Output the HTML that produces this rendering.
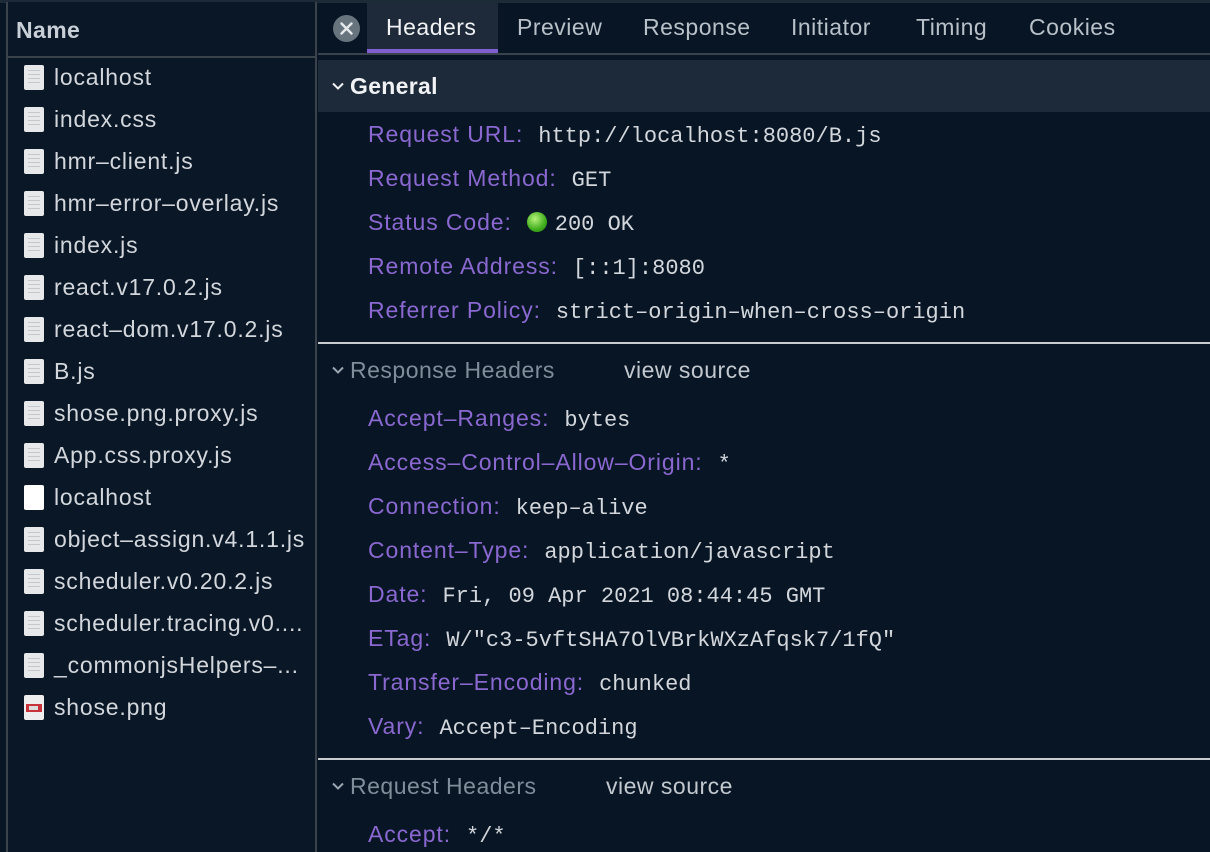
<!DOCTYPE html>
<html><head><meta charset="utf-8"><style>
*{margin:0;padding:0;box-sizing:border-box}
body{width:1210px;height:852px;background:#071525;position:relative;overflow:hidden;font-family:"Liberation Sans",sans-serif;color:#d3d7dc;letter-spacing:0.8px}
.a{position:absolute;white-space:nowrap}
.left{position:absolute;left:6px;top:2px;width:311px;height:850px;background:#091727;border-left:2px solid #3a434c;border-right:2px solid #3a434c}
.name{font-size:23px;font-weight:bold;color:#c9cfd6;left:16px;top:17px;letter-spacing:0.4px}
.row{position:absolute;left:8px;width:307px;height:42px;font-size:23px;color:#d3d7dc}
.row span{position:absolute;left:46px;top:8px}
.ic{position:absolute;left:16px;top:9px;width:20px;height:25px;background:#e6e8ea;border-radius:2px}
.ic i{position:absolute;left:4px;width:12px;height:1px;background:#c4c8cc}
.lab{color:#8a68d0;font-size:23px;margin-right:15px;letter-spacing:0.9px}
.val{font-family:"Liberation Mono",monospace;font-size:22px;color:#d3d7dc;letter-spacing:0}
.kv{position:absolute;left:368px;white-space:nowrap}
.tab{position:absolute;top:14px;font-size:23px;color:#b8c0c8;letter-spacing:0.5px}
.chev{display:inline-block;width:14px;height:10px;margin-right:6px;vertical-align:3px}
</style></head><body>
<div class="a" style="left:0;top:0;width:1210px;height:3px;background:#1d2a38"></div>
<div class="left"></div>
<div class="a" style="left:8px;top:56px;width:309px;height:2px;background:#3a434c"></div>
<div class="a name">Name</div>

<div class="row" style="top:56px"><div class="ic"><i style="top:5px"></i><i style="top:9px"></i><i style="top:13px"></i><i style="top:17px"></i></div><span>localhost</span></div>
<div class="row" style="top:98px"><div class="ic"><i style="top:5px"></i><i style="top:9px"></i><i style="top:13px"></i><i style="top:17px"></i></div><span>index.css</span></div>
<div class="row" style="top:140px"><div class="ic"><i style="top:5px"></i><i style="top:9px"></i><i style="top:13px"></i><i style="top:17px"></i></div><span>hmr–client.js</span></div>
<div class="row" style="top:182px"><div class="ic"><i style="top:5px"></i><i style="top:9px"></i><i style="top:13px"></i><i style="top:17px"></i></div><span>hmr–error–overlay.js</span></div>
<div class="row" style="top:224px"><div class="ic"><i style="top:5px"></i><i style="top:9px"></i><i style="top:13px"></i><i style="top:17px"></i></div><span>index.js</span></div>
<div class="row" style="top:266px"><div class="ic"><i style="top:5px"></i><i style="top:9px"></i><i style="top:13px"></i><i style="top:17px"></i></div><span>react.v17.0.2.js</span></div>
<div class="row" style="top:308px"><div class="ic"><i style="top:5px"></i><i style="top:9px"></i><i style="top:13px"></i><i style="top:17px"></i></div><span>react–dom.v17.0.2.js</span></div>
<div class="row" style="top:350px"><div class="ic"><i style="top:5px"></i><i style="top:9px"></i><i style="top:13px"></i><i style="top:17px"></i></div><span>B.js</span></div>
<div class="row" style="top:392px"><div class="ic"><i style="top:5px"></i><i style="top:9px"></i><i style="top:13px"></i><i style="top:17px"></i></div><span>shose.png.proxy.js</span></div>
<div class="row" style="top:434px"><div class="ic"><i style="top:5px"></i><i style="top:9px"></i><i style="top:13px"></i><i style="top:17px"></i></div><span>App.css.proxy.js</span></div>
<div class="row" style="top:476px"><div class="ic" style="background:#fff"></div><span>localhost</span></div>
<div class="row" style="top:518px"><div class="ic"><i style="top:5px"></i><i style="top:9px"></i><i style="top:13px"></i><i style="top:17px"></i></div><span>object–assign.v4.1.1.js</span></div>
<div class="row" style="top:560px"><div class="ic"><i style="top:5px"></i><i style="top:9px"></i><i style="top:13px"></i><i style="top:17px"></i></div><span>scheduler.v0.20.2.js</span></div>
<div class="row" style="top:602px"><div class="ic"><i style="top:5px"></i><i style="top:9px"></i><i style="top:13px"></i><i style="top:17px"></i></div><span>scheduler.tracing.v0....</span></div>
<div class="row" style="top:644px"><div class="ic"><i style="top:5px"></i><i style="top:9px"></i><i style="top:13px"></i><i style="top:17px"></i></div><span>_commonjsHelpers–...</span></div>
<div class="row" style="top:686px"><div class="ic" style="background:#eee"><i style="top:9px;left:2px;width:16px;height:8px;background:#c8323a"></i><i style="top:11px;left:5px;width:9px;height:4px;background:#ddd"></i></div><span>shose.png</span></div>

<div class="a" style="left:318px;top:53px;width:892px;height:2px;background:#3a434c"></div>
<div class="a" style="left:333px;top:15px;width:27px;height:27px;border-radius:50%;background:#67747e;letter-spacing:0"><svg width="27" height="27"><path d="M8.5 8.5L18.5 18.5M18.5 8.5L8.5 18.5" stroke="#e6e9ec" stroke-width="2.4" stroke-linecap="round"/></svg></div>
<div class="a" style="left:367px;top:3px;width:131px;height:50px;background:#1e2a39;border-bottom:4px solid #7f5fcf"></div>
<div class="tab" style="left:386px;color:#f0f2f4">Headers</div>
<div class="tab" style="left:517px">Preview</div>
<div class="tab" style="left:643px">Response</div>
<div class="tab" style="left:791px">Initiator</div>
<div class="tab" style="left:916px">Timing</div>
<div class="tab" style="left:1029px">Cookies</div>

<div class="a" style="left:318px;top:60px;width:892px;height:52px;background:#1d2a3a"></div>
<div class="a" style="left:331px;top:73px;font-size:23px;font-weight:bold;color:#f0f2f4;letter-spacing:0.3px"><svg class="chev" viewBox="0 0 14 10" style="margin-right:5px"><path d="M2 2.5L7 7.5L12 2.5" stroke="#f0f2f4" stroke-width="2" fill="none"/></svg>General</div>

<div class="kv" style="top:121px"><span class="lab">Request URL:</span><span class="val">http://localhost:8080/B.js</span></div>
<div class="kv" style="top:165px"><span class="lab">Request Method:</span><span class="val">GET</span></div>
<div class="kv" style="top:209px"><span class="lab">Status Code:</span><span style="display:inline-block;width:20px;height:20px;border-radius:50%;background:radial-gradient(circle at 40% 35%,#b6f07a,#3fae1c 60%,#2a7a10);vertical-align:-2px;margin-right:8px"></span><span class="val">200 OK</span></div>
<div class="kv" style="top:253px"><span class="lab">Remote Address:</span><span class="val">[::1]:8080</span></div>
<div class="kv" style="top:297px"><span class="lab">Referrer Policy:</span><span class="val">strict–origin–when–cross–origin</span></div>

<div class="a" style="left:318px;top:342px;width:892px;height:2px;background:#c8ccd0"></div>
<div class="a" style="left:331px;top:357px;font-size:23px;color:#7f8e9a;letter-spacing:0.5px"><svg class="chev" viewBox="0 0 14 10" style="margin-right:5px"><path d="M2 2.5L7 7.5L12 2.5" stroke="#9aa6b0" stroke-width="2" fill="none"/></svg>Response Headers</div>
<div class="a" style="left:624px;top:357px;font-size:23px;color:#c2c8ce;letter-spacing:0.5px">view source</div>

<div class="kv" style="top:405px"><span class="lab">Accept–Ranges:</span><span class="val">bytes</span></div>
<div class="kv" style="top:449px"><span class="lab">Access–Control–Allow–Origin:</span><span class="val">*</span></div>
<div class="kv" style="top:493px"><span class="lab">Connection:</span><span class="val">keep–alive</span></div>
<div class="kv" style="top:537px"><span class="lab">Content–Type:</span><span class="val">application/javascript</span></div>
<div class="kv" style="top:581px"><span class="lab">Date:</span><span class="val">Fri, 09 Apr 2021 08:44:45 GMT</span></div>
<div class="kv" style="top:625px"><span class="lab">ETag:</span><span class="val">W/"c3-5vftSHA7OlVBrkWXzAfqsk7/1fQ"</span></div>
<div class="kv" style="top:669px"><span class="lab">Transfer–Encoding:</span><span class="val">chunked</span></div>
<div class="kv" style="top:713px"><span class="lab">Vary:</span><span class="val">Accept–Encoding</span></div>

<div class="a" style="left:318px;top:758px;width:892px;height:2px;background:#c8ccd0"></div>
<div class="a" style="left:331px;top:773px;font-size:23px;color:#7f8e9a;letter-spacing:0.5px"><svg class="chev" viewBox="0 0 14 10" style="margin-right:5px"><path d="M2 2.5L7 7.5L12 2.5" stroke="#9aa6b0" stroke-width="2" fill="none"/></svg>Request Headers</div>
<div class="a" style="left:606px;top:773px;font-size:23px;color:#c2c8ce;letter-spacing:0.5px">view source</div>
<div class="kv" style="top:821px"><span class="lab">Accept:</span><span class="val">*/*</span></div>
</body></html>
